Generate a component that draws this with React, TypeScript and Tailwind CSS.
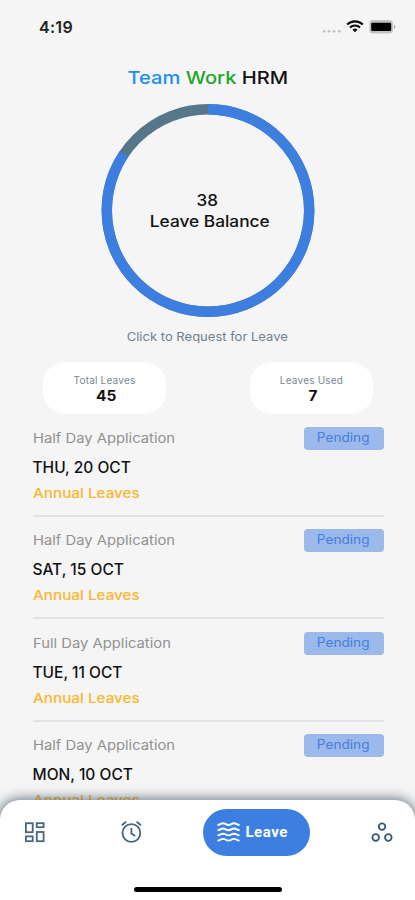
import React from "react";

type Leave = { kind: string; date: string; type: string; status: string };

const leaves: Leave[] = [
  { kind: "Half Day Application", date: "THU, 20 OCT", type: "Annual Leaves", status: "Pending" },
  { kind: "Half Day Application", date: "SAT, 15 OCT", type: "Annual Leaves", status: "Pending" },
  { kind: "Full Day Application", date: "TUE, 11 OCT", type: "Annual Leaves", status: "Pending" },
  { kind: "Half Day Application", date: "MON, 10 OCT", type: "Annual Leaves", status: "Pending" },
];

function StatusBar() {
  return (
    <div className="flex h-[54px] items-center justify-between pl-[39px] pr-[19px]">
      <span className="text-[16px] font-semibold leading-5 tracking-[0.3px] text-[#222]">4:19</span>
      <svg width="76" height="16" viewBox="0 0 76 16">
        <g fill="#c2c2c2">
          <circle cx="4" cy="12.3" r="1.4" />
          <circle cx="9" cy="12.3" r="1.4" />
          <circle cx="14" cy="12.3" r="1.4" />
          <circle cx="19.3" cy="12.3" r="1.4" />
        </g>
        <g fill="none" stroke="#0a0a0a" strokeWidth="2.1">
          <path d="M27.2 5.600a11 11 0 0 1 15.600 0" />
          <path d="M30 8.600a7 7 0 0 1 10 0" />
        </g>
        <path d="M35 13.300l-2.500-2.600a3.600 3.600 0 0 1 5 0z" fill="#0a0a0a" />
        <rect x="49.4" y="1" width="23.6" height="13.6" rx="3.6" fill="#c3c3c3" />
        <path d="M74 5.800v4.400c1.800-.6 1.800-3.800 0-4.400z" fill="#a5a5a5" />
        <rect x="51.2" y="3.800" width="20" height="8.2" rx="1.2" fill="#000" />
      </svg>
    </div>
  );
}

function BalanceRing() {
  return (
    <div className="grid h-[214px] w-[214px] place-items-center">
      <svg className="col-start-1 row-start-1 -rotate-90" width="214" height="214" viewBox="0 0 214 214">
        <circle cx="107.5" cy="107" r="101.2" fill="none" stroke="#567689" strokeWidth="10.4" />
        <circle cx="107.5" cy="107" r="101.2" fill="none" stroke="#3c7fe0" strokeWidth="10.4" pathLength="45" strokeDasharray="38 7" />
      </svg>
      <div className="col-start-1 row-start-1 ml-[4px] text-center text-[15.5px] font-medium leading-[21px]">
        <div className="-ml-[5px] scale-x-110">38</div>
        <div className="scale-x-[1.115]">Leave Balance</div>
      </div>
    </div>
  );
}

function Stat({ label, value }: { label: string; value: string }) {
  return (
    <div className="flex h-[52px] w-[123px] flex-col items-center rounded-[22px] bg-white pt-[11px]">
      <span className="text-[10px] leading-[14px] tracking-[0.2px] text-[#7b8790]">{label}</span>
      <span className="ml-[4px] scale-x-110 text-[14px] font-bold leading-[17px]">{value}</span>
    </div>
  );
}

function LeaveRow({ leave }: { leave: Leave }) {
  return (
    <li className="h-[102.3px]">
      <div className="flex items-center justify-between">
        <span className="origin-left scale-x-[1.095] text-[13.5px] leading-[23px] text-[#919191]">{leave.kind}</span>
        <span className="flex h-[23px] w-[80px] items-center justify-center rounded-[4px] bg-[#9bb9ea] text-[12.5px] text-[#4580dd]">
          <span className="scale-x-[1.09]">{leave.status}</span>
        </span>
      </div>
      <div className="mt-[8px] text-[15.5px] font-medium leading-5">{leave.date}</div>
      <div className="mt-[5px] w-fit origin-left scale-x-[1.13] text-[13.5px] font-medium leading-5 text-[#fbb731]">{leave.type}</div>
      <div className="mt-[12px] h-[2px] bg-[#e2e2e2]" />
    </li>
  );
}

function BottomNav() {
  return (
    <nav className="absolute inset-x-0 bottom-0 h-[100px] rounded-t-[20px] bg-white shadow-[0_0_12px_2px_rgba(38,65,78,0.65)]">
      <div className="flex h-[64px] items-center pl-[23px]">
        <svg width="24" height="24" viewBox="0 0 24 24" fill="none" stroke="#44687a" strokeWidth="1.8">
          <rect x="2.9" y="3.2" width="6.8" height="9" />
          <rect x="13.8" y="3.2" width="6.8" height="4" />
          <rect x="2.9" y="16.4" width="6.8" height="4.8" />
          <rect x="13.8" y="12" width="6.8" height="9.2" />
        </svg>
        <svg className="ml-[71px]" width="26" height="26" viewBox="0 0 26 26" fill="none" stroke="#44687a" strokeWidth="1.8">
          <circle cx="13.4" cy="14" r="8.9" />
          <path d="M13.4 9v5.4l3.8 2.5M3.8 6.3l4.4-3.5M23 6.3l-4.4-3.5" />
        </svg>
        <div className="ml-[58.5px] flex h-[47px] w-[107.5px] items-center rounded-full bg-[#3c7fe0] pl-[14px] text-white">
          <svg width="23" height="20" viewBox="0 0 23 20" fill="none" stroke="white" strokeWidth="1.9">
            <path d="M.5 3c2.8 0 2.8-1.7 5.5-1.7S8.8 3 11.5 3s2.8-1.7 5.500-1.7S19.7 3 22.5 3" />
            <path d="M.5 8.2c2.8 0 2.8-1.7 5.5-1.7s2.8 1.7 5.5 1.7 2.8-1.7 5.5-1.7 2.7 1.7 5.5 1.7" />
            <path d="M.5 13.4c2.8 0 2.8-1.7 5.5-1.7s2.8 1.7 5.5 1.7 2.8-1.7 5.5-1.7 2.7 1.7 5.5 1.7" />
            <path d="M.5 18.6c2.8 0 2.8-1.7 5.5-1.7s2.8 1.7 5.5 1.7 2.8-1.7 5.5-1.7 2.7 1.7 5.5 1.7" />
          </svg>
          <span className="ml-[6px] font-[Roboto,sans-serif] text-[15px] font-bold leading-5 tracking-[0.5px]">Leave</span>
        </div>
        <svg className="ml-[59.5px]" width="24" height="24" viewBox="0 0 24 24" fill="none" stroke="#355a6c" strokeWidth="1.8">
          <circle cx="12" cy="6.6" r="3.3" />
          <circle cx="5.7" cy="17.5" r="3.3" />
          <circle cx="18.3" cy="17.5" r="3.3" />
        </svg>
      </div>
      <div className="mx-auto mt-[22.5px] h-[5px] w-[148px] rounded-full bg-black" />
    </nav>
  );
}

export default function App() {
  return (
    <main className="relative h-[900px] w-[415px] overflow-hidden bg-[#f5f5f5] font-[Inter,sans-serif] text-[#111]">
      <StatusBar />
      <div className="flex flex-col items-center">
        <h1 className="mt-[12px] scale-x-[1.15] text-[17.5px] font-medium leading-6">
          <span className="text-[#218fee]">Team</span> <span className="text-[#22a52b]">Work</span> HRM
        </h1>
        <div className="mt-[14px]">
          <BalanceRing />
        </div>
        <p className="mt-[10px] scale-x-[1.085] text-[12px] leading-[18px] text-[#71818b]">Click to Request for Leave</p>
      </div>
      <div className="mt-[16px] flex justify-between pl-[43px] pr-[42px]">
        <Stat label="Total Leaves" value="45" />
        <Stat label="Leaves Used" value="7" />
      </div>
      <ul className="mt-[13px] flex flex-col pl-[32.5px] pr-[31.5px]">
        {leaves.map((leave) => (
          <LeaveRow key={leave.date} leave={leave} />
        ))}
      </ul>
      <BottomNav />
    </main>
  );
}
